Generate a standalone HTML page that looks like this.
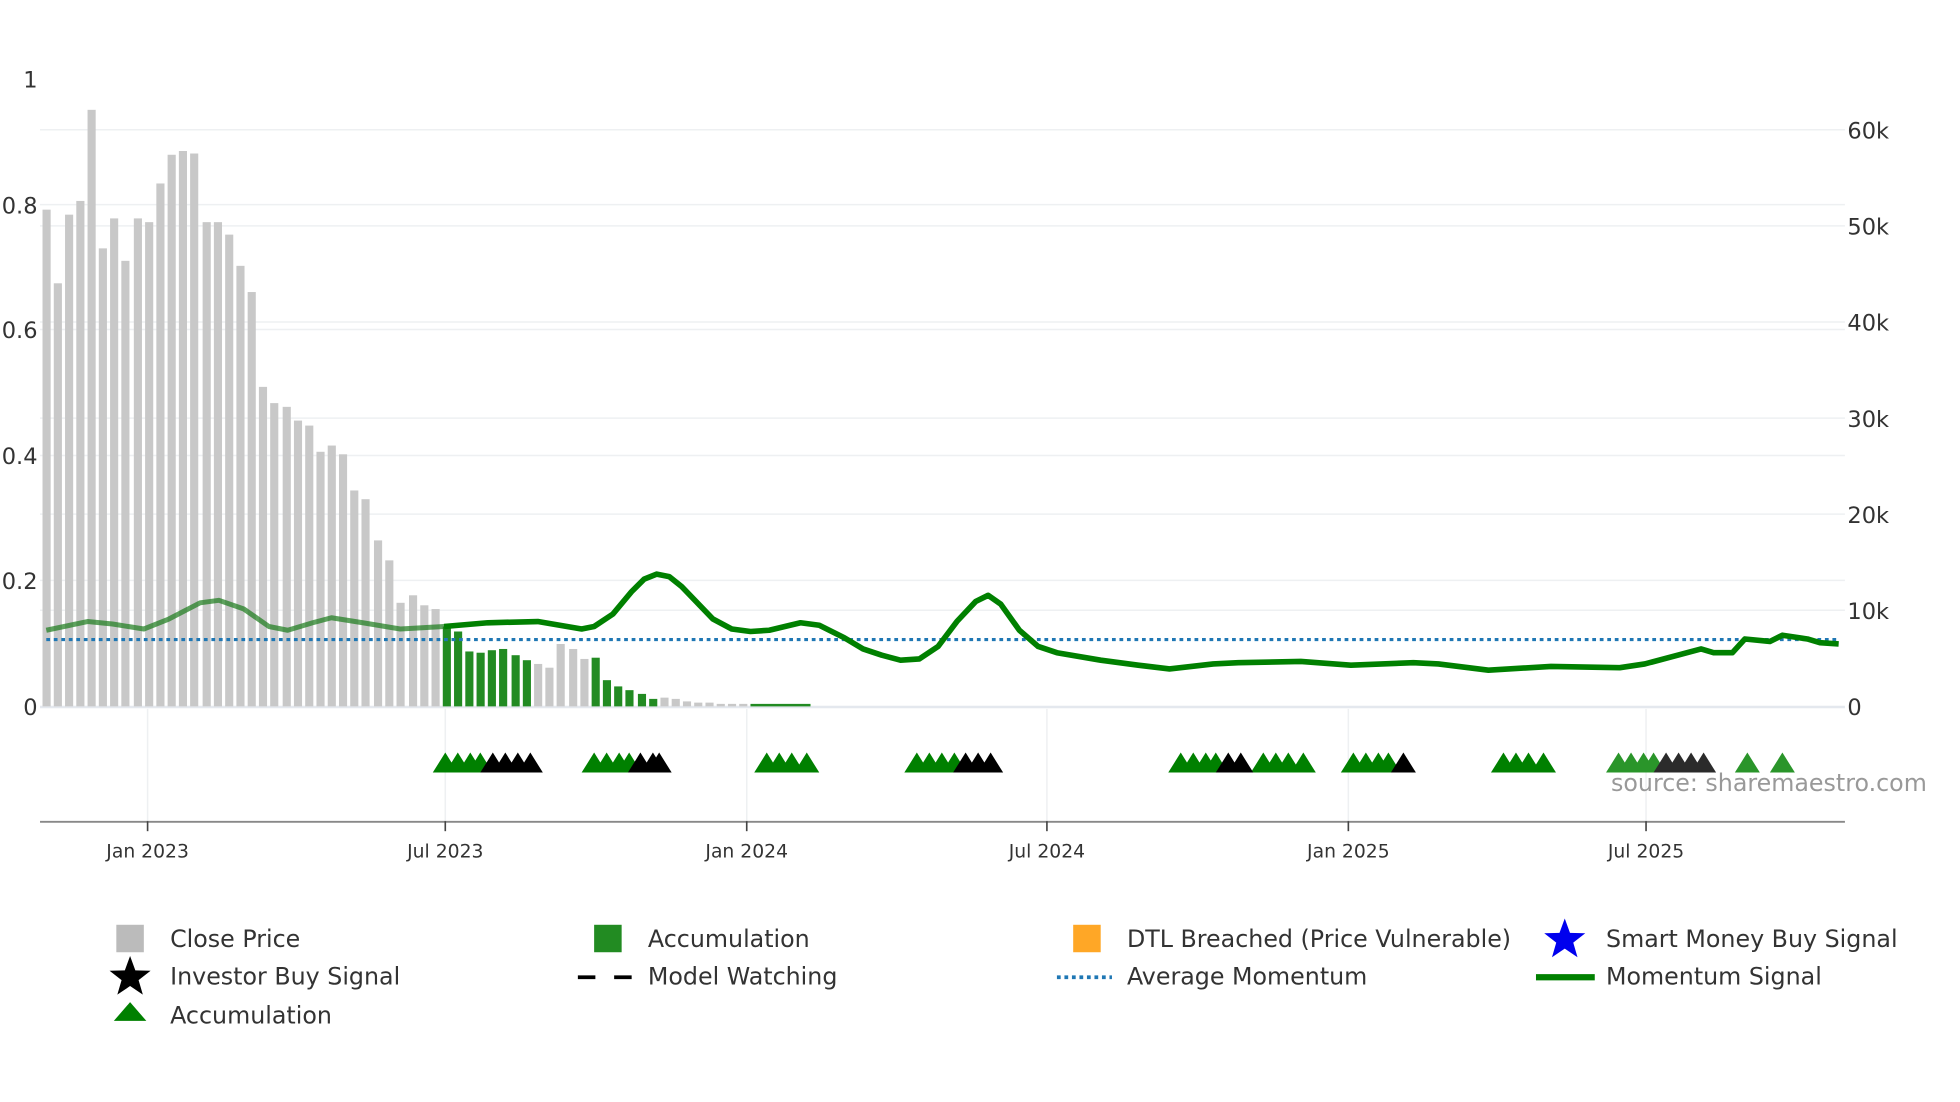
<!DOCTYPE html>
<html><head><meta charset="utf-8"><style>html,body{margin:0;padding:0;background:#fff;overflow:hidden}svg{display:block}text{font-family:"DejaVu Sans","Liberation Sans",sans-serif}</style></head><body>
<svg width="1960" height="1102" viewBox="0 0 1567 883" preserveAspectRatio="none" xmlns="http://www.w3.org/2000/svg">
<rect width="1567" height="883" fill="#fff"/>
<g stroke="#eef0f2" stroke-width="1.2">
<line x1="32" x2="1475" y1="104" y2="104"/><line x1="32" x2="1475" y1="164" y2="164"/><line x1="32" x2="1475" y1="181" y2="181"/><line x1="32" x2="1475" y1="258" y2="258"/><line x1="32" x2="1475" y1="264" y2="264"/><line x1="32" x2="1475" y1="335" y2="335"/><line x1="32" x2="1475" y1="365" y2="365"/><line x1="32" x2="1475" y1="412" y2="412"/><line x1="32" x2="1475" y1="465" y2="465"/><line x1="32" x2="1475" y1="489" y2="489"/>
<line x1="118" x2="118" y1="568" y2="658"/><line x1="356" x2="356" y1="568" y2="658"/><line x1="597" x2="597" y1="568" y2="658"/><line x1="837" x2="837" y1="568" y2="658"/><line x1="1078" x2="1078" y1="568" y2="658"/><line x1="1316" x2="1316" y1="568" y2="658"/>
</g>
<line x1="32" x2="1475" y1="566.5" y2="566.5" stroke="#e4e8ee" stroke-width="2"/>
<g fill="#c8c8c8">
<rect x="34" y="168" width="6.5" height="398"/><rect x="43" y="227" width="6.5" height="339"/><rect x="52" y="172" width="6.5" height="394"/><rect x="61" y="161" width="6.5" height="405"/><rect x="70" y="88" width="6.5" height="478"/><rect x="79" y="199" width="6.5" height="367"/><rect x="88" y="175" width="6.5" height="391"/><rect x="97" y="209" width="6.5" height="357"/><rect x="107" y="175" width="6.5" height="391"/><rect x="116" y="178" width="6.5" height="388"/><rect x="125" y="147" width="6.5" height="419"/><rect x="134" y="124" width="6.5" height="442"/><rect x="143" y="121" width="6.5" height="445"/><rect x="152" y="123" width="6.5" height="443"/><rect x="162" y="178" width="6.5" height="388"/><rect x="171" y="178" width="6.5" height="388"/><rect x="180" y="188" width="6.5" height="378"/><rect x="189" y="213" width="6.5" height="353"/><rect x="198" y="234" width="6.5" height="332"/><rect x="207" y="310" width="6.5" height="256"/><rect x="216" y="323" width="6.5" height="243"/><rect x="226" y="326" width="6.5" height="240"/><rect x="235" y="337" width="6.5" height="229"/><rect x="244" y="341" width="6.5" height="225"/><rect x="253" y="362" width="6.5" height="204"/><rect x="262" y="357" width="6.5" height="209"/><rect x="271" y="364" width="6.5" height="202"/><rect x="280" y="393" width="6.5" height="173"/><rect x="289" y="400" width="6.5" height="166"/><rect x="299" y="433" width="6.5" height="133"/><rect x="308" y="449" width="6.5" height="117"/><rect x="317" y="483" width="6.5" height="83"/><rect x="327" y="477" width="6.5" height="89"/><rect x="336" y="485" width="6.5" height="81"/><rect x="345" y="488" width="6.5" height="78"/>
<rect x="427" y="532" width="6.5" height="34"/><rect x="436" y="535" width="6.5" height="31"/><rect x="445" y="516" width="6.5" height="50"/><rect x="455" y="520" width="6.5" height="46"/><rect x="464" y="528" width="6.5" height="38"/>
<rect x="528" y="559" width="6.5" height="7"/><rect x="537" y="560" width="6.5" height="6"/><rect x="546" y="562" width="6.5" height="4"/><rect x="555" y="563" width="6.5" height="3"/><rect x="564" y="563" width="6.5" height="3"/><rect x="573" y="564" width="6.5" height="2"/><rect x="582" y="564" width="6.5" height="2"/><rect x="591" y="564" width="6.5" height="2"/>
</g>
<g fill="#228b22">
<rect x="354" y="502" width="6.5" height="64"/><rect x="363" y="506" width="6.5" height="60"/><rect x="372" y="522" width="6.5" height="44"/><rect x="381" y="523" width="6.5" height="43"/><rect x="390" y="521" width="6.5" height="45"/><rect x="399" y="520" width="6.5" height="46"/><rect x="409" y="525" width="6.5" height="41"/><rect x="418" y="529" width="6.5" height="37"/>
<rect x="473" y="527" width="6.5" height="39"/><rect x="482" y="545" width="6.5" height="21"/><rect x="491" y="550" width="6.5" height="16"/><rect x="500" y="553" width="6.5" height="13"/><rect x="510" y="556" width="6.5" height="10"/><rect x="519" y="560" width="6.5" height="6"/><rect x="600" y="564" width="48" height="2"/>
</g>
<line x1="37" x2="1470" y1="512.5" y2="512.5" stroke="#1f77b4" stroke-width="2.5" stroke-dasharray="3,3"/>
<polyline fill="none" stroke="#1a7a1a" stroke-opacity="0.7" stroke-width="4" stroke-linejoin="round" points="37,505 70,498 90,500 115,504 135,496 160,483 175,481 195,488 215,502 230,505 250,499 265,495 290,499 320,504 355,502"/>
<polyline fill="none" stroke="#008000" stroke-width="4.5" stroke-linejoin="round" points="355,502 390,499 430,498 465,504 475,502 490,492 505,474 515,464 525,460 535,462 545,470 570,496 585,504 600,506 615,505 640,499 655,501 675,511 690,520 705,525 720,529 735,528 750,518 765,498 780,482 790,477 800,484 815,505 830,518 845,523 880,529 910,533 935,536 970,532 990,531 1040,530 1080,533 1130,531 1150,532 1190,537 1240,534 1295,535 1315,532 1360,520 1370,523 1385,523 1395,512 1415,514 1425,509 1445,512 1455,515 1470,516"/>
<g fill="#008000">
<path d="M346,619l10-16 10,16zM356,619l10-16 10,16zM366,619l10-16 10,16zM374,619l10-16 10,16z"/>
<path d="M465,619l10-16 10,16zM475,619l10-16 10,16zM485,619l10-16 10,16zM493,619l10-16 10,16z"/>
<path d="M603,619l10-16 10,16zM613,619l10-16 10,16zM623,619l10-16 10,16zM635,619l10-16 10,16z"/>
<path d="M723,619l10-16 10,16zM733,619l10-16 10,16zM743,619l10-16 10,16zM753,619l10-16 10,16z"/>
<path d="M934,619l10-16 10,16zM944,619l10-16 10,16zM954,619l10-16 10,16zM962,619l10-16 10,16z"/>
<path d="M1000,619l10-16 10,16zM1010,619l10-16 10,16zM1020,619l10-16 10,16zM1032,619l10-16 10,16z"/>
<path d="M1072,619l10-16 10,16zM1082,619l10-16 10,16zM1092,619l10-16 10,16zM1100,619l10-16 10,16z"/>
<path d="M1192,619l10-16 10,16zM1202,619l10-16 10,16zM1212,619l10-16 10,16zM1224,619l10-16 10,16z"/>
</g>
<g fill="#000">
<path d="M384,619l10-16 10,16zM394,619l10-16 10,16zM404,619l10-16 10,16zM414,619l10-16 10,16z"/>
<path d="M502,619l10-16 10,16zM512,619l10-16 10,16zM517,619l10-16 10,16z"/>
<path d="M762,619l10-16 10,16zM772,619l10-16 10,16zM782,619l10-16 10,16z"/>
<path d="M972,619l10-16 10,16zM982,619l10-16 10,16z"/>
<path d="M1112,619l10-16 10,16z"/>
</g>
<g fill="#2a952a">
<path d="M1284,619l10-16 10,16zM1294,619l10-16 10,16zM1304,619l10-16 10,16zM1312,619l10-16 10,16zM1387,619l10-16 10,16zM1415,619l10-16 10,16z"/>
</g>
<g fill="#2b2b2b">
<path d="M1322,619l10-16 10,16zM1332,619l10-16 10,16zM1342,619l10-16 10,16zM1352,619l10-16 10,16z"/>
</g>
<line x1="32" x2="1475" y1="658.5" y2="658.5" stroke="#888" stroke-width="1.5"/>
<g stroke="#444" stroke-width="1.3"><line x1="118" x2="118" y1="658" y2="666"/><line x1="356" x2="356" y1="658" y2="666"/><line x1="597" x2="597" y1="658" y2="666"/><line x1="837" x2="837" y1="658" y2="666"/><line x1="1078" x2="1078" y1="658" y2="666"/><line x1="1316" x2="1316" y1="658" y2="666"/></g>
<g font-size="15" fill="#333" text-anchor="middle">
<text x="118" y="687">Jan 2023</text><text x="356" y="687">Jul 2023</text><text x="597" y="687">Jan 2024</text><text x="837" y="687">Jul 2024</text><text x="1078" y="687">Jan 2025</text><text x="1316" y="687">Jul 2025</text>
</g>
<g font-size="18" fill="#333" text-anchor="end">
<text x="30" y="70">1</text><text x="30" y="171">0.8</text><text x="30" y="271">0.6</text><text x="30" y="372">0.4</text><text x="30" y="472">0.2</text><text x="30" y="573">0</text>
</g>
<g font-size="18" fill="#333">
<text x="1477" y="111">60k</text><text x="1477" y="188">50k</text><text x="1477" y="265">40k</text><text x="1477" y="342">30k</text><text x="1477" y="419">20k</text><text x="1477" y="496">10k</text><text x="1477" y="573">0</text>
</g>
<text x="1288" y="634" font-size="19" fill="#999">source: sharemaestro.com</text>
<g font-size="19" fill="#333">
<rect x="93" y="741" width="22" height="22" fill="#bbb"/><text x="136" y="759">Close Price</text>
<rect x="475" y="741" width="22" height="22" fill="#228b22"/><text x="518" y="759">Accumulation</text>
<rect x="858" y="741" width="22" height="22" fill="#ffa726"/><text x="901" y="759">DTL Breached (Price Vulnerable)</text>
<path d="M1251,736l4.2,11.5 12.2,0.3-9.6,7.5 3.4,11.7-10.2-6.9-10.2,6.9 3.4-11.7-9.6-7.5 12.2-0.3z" fill="#0000ee"/><text x="1284" y="759">Smart Money Buy Signal</text>
<path d="M104,766l4.2,11.5 12.2,0.3-9.6,7.5 3.4,11.7-10.2-6.9-10.2,6.9 3.4-11.7-9.6-7.5 12.2-0.3z" fill="#000"/><text x="136" y="789">Investor Buy Signal</text>
<path d="M462,783h14M491,783h14" stroke="#000" stroke-width="3"/><text x="518" y="789">Model Watching</text>
<line x1="845" x2="889" y1="783" y2="783" stroke="#1f77b4" stroke-width="3" stroke-dasharray="3,3"/><text x="901" y="789">Average Momentum</text>
<line x1="1228" x2="1275" y1="783" y2="783" stroke="#008000" stroke-width="5"/><text x="1284" y="789">Momentum Signal</text>
<path d="M91,818l13-15 13,15z" fill="#008000"/><text x="136" y="820">Accumulation</text>
</g>
</svg>
</body></html>
